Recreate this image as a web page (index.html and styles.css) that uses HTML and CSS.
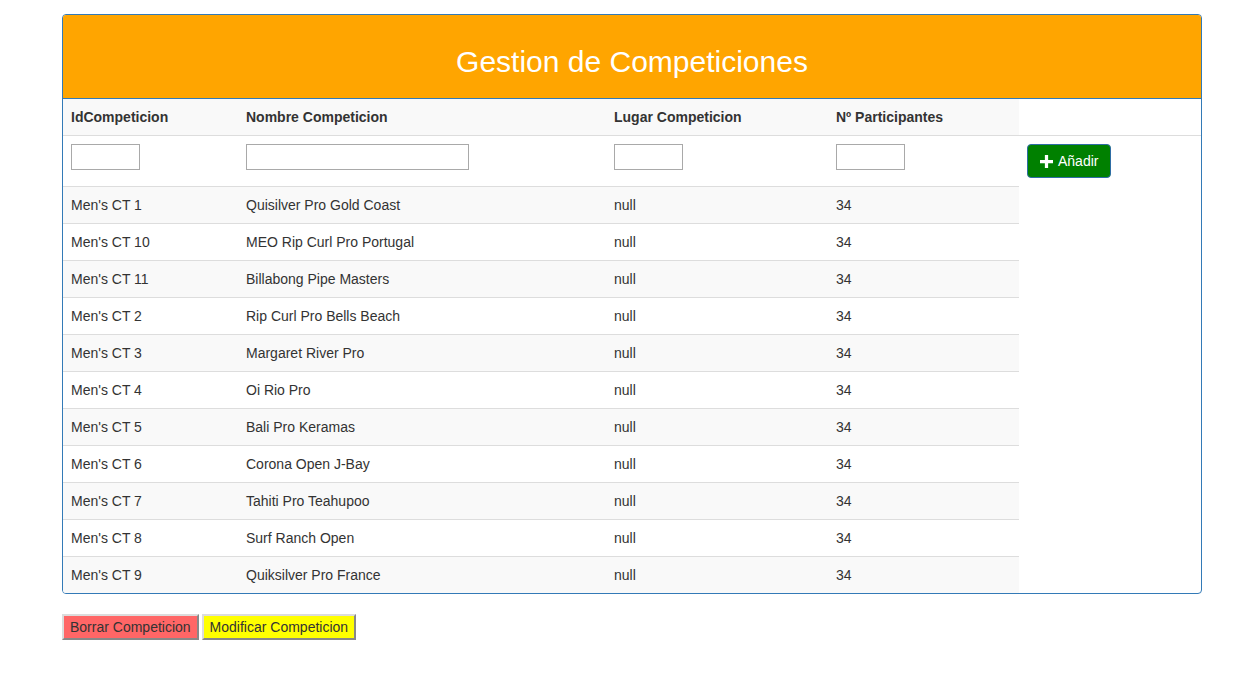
FILE: index.html
```html
<!DOCTYPE html>
<html lang="es">
<head>
<meta charset="utf-8">
<title>Gestion de Competiciones</title>
<link rel="stylesheet" href="styles.css">
</head>
<body>
<div class="page">
  <div class="panel">
    <div class="panel-heading">
      <h2 class="panel-title">Gestion de Competiciones</h2>
    </div>
    <table class="table">
      <colgroup>
        <col class="c1"><col class="c2"><col class="c3"><col class="c4"><col class="c5">
      </colgroup>
      <tbody>
        <tr>
          <th>IdCompeticion</th>
          <th>Nombre Competicion</th>
          <th>Lugar Competicion</th>
          <th>Nº Participantes</th>
        </tr>
        <tr>
          <td><input class="inp-sm" type="text"></td>
          <td><input class="inp-lg" type="text"></td>
          <td><input class="inp-sm" type="text"></td>
          <td><input class="inp-sm" type="text"></td>
          <td><button class="btn-add" type="button"><svg class="plus" viewBox="0 0 12 12" width="13" height="13"><path d="M4.5 0h3v4.5H12v3H7.5V12h-3V7.5H0v-3h4.5z" fill="#fff"/></svg> Añadir</button></td>
        </tr>
        <tr><td>Men's CT 1</td><td>Quisilver Pro Gold Coast</td><td>null</td><td>34</td></tr>
        <tr><td>Men's CT 10</td><td>MEO Rip Curl Pro Portugal</td><td>null</td><td>34</td></tr>
        <tr><td>Men's CT 11</td><td>Billabong Pipe Masters</td><td>null</td><td>34</td></tr>
        <tr><td>Men's CT 2</td><td>Rip Curl Pro Bells Beach</td><td>null</td><td>34</td></tr>
        <tr><td>Men's CT 3</td><td>Margaret River Pro</td><td>null</td><td>34</td></tr>
        <tr><td>Men's CT 4</td><td>Oi Rio Pro</td><td>null</td><td>34</td></tr>
        <tr><td>Men's CT 5</td><td>Bali Pro Keramas</td><td>null</td><td>34</td></tr>
        <tr><td>Men's CT 6</td><td>Corona Open J-Bay</td><td>null</td><td>34</td></tr>
        <tr><td>Men's CT 7</td><td>Tahiti Pro Teahupoo</td><td>null</td><td>34</td></tr>
        <tr><td>Men's CT 8</td><td>Surf Ranch Open</td><td>null</td><td>34</td></tr>
        <tr><td>Men's CT 9</td><td>Quiksilver Pro France</td><td>null</td><td>34</td></tr>
      </tbody>
    </table>
  </div>
  <div class="actions">
    <button class="btn-old btn-red" type="button">Borrar Competicion</button>
    <button class="btn-old btn-yellow" type="button">Modificar Competicion</button>
  </div>
</div>
</body>
</html>
```
FILE: styles.css
```css
* { box-sizing: border-box; }
html, body { margin: 0; padding: 0; }
body {
  font-family: "Liberation Sans", Arial, Helvetica, sans-serif;
  font-size: 14px;
  line-height: 1.42857143;
  color: #333;
  background: #fff;
}
.page {
  width: 1140px;
  margin: 14px 0 0 62px;
}
.panel {
  border: 1px solid #337ab7;
  border-radius: 4px;
  overflow: hidden;
  margin-bottom: 20px;
}
.panel-heading {
  background: #ffa500;
  border-bottom: 1px solid #337ab7;
  padding: 10px 15px;
}
.panel-title {
  margin: 20px 0 10px;
  font-size: 30px;
  font-weight: 500;
  line-height: 1.1;
  color: #fff;
  text-align: center;
}
.table {
  width: 100%;
  border-collapse: collapse;
  border-spacing: 0;
  table-layout: fixed;
}
.c1 { width: 175px; }
.c2 { width: 368px; }
.c3 { width: 222px; }
.c4 { width: 191px; }
.c5 { width: 182px; }
.table th, .table td {
  padding: 8px;
  text-align: left;
  vertical-align: top;
  border-top: 1px solid #ddd;
  line-height: 1.42857143;
}
.table tr:first-child th { border-top: 0; }
.table th { font-weight: bold; }
.table tr:nth-child(odd) > th,
.table tr:nth-child(odd) > td { background: #f9f9f9; }
input {
  display: block;
  height: 26px;
  margin: 0;
  border: 1px solid #a9a9a9;
  padding: 1px 2px;
  font: inherit;
  background: #fff;
}
.inp-sm { width: 69px; }
.inp-lg { width: 223px; }
.btn-add {
  display: inline-flex;
  align-items: center;
  gap: 5px;
  height: 34px;
  padding: 6px 12px;
  border: 1px solid #2e6da4;
  border-radius: 4px;
  background: #008000;
  color: #fff;
  font: inherit;
  font-size: 14px;
  line-height: 20px;
  cursor: pointer;
}
.plus { display: block; }
.actions {
  display: flex;
  gap: 3px;
}
.btn-old {
  height: 26px;
  padding: 1px 6px;
  font: inherit;
  font-size: 14px;
  line-height: 20px;
  color: #333;
  border-width: 2px;
  border-style: solid;
  border-color: #dcdcdc #888 #888 #dcdcdc;
}
.btn-red { background: #ff6666; }
.btn-yellow { background: #ffff00; }
```
